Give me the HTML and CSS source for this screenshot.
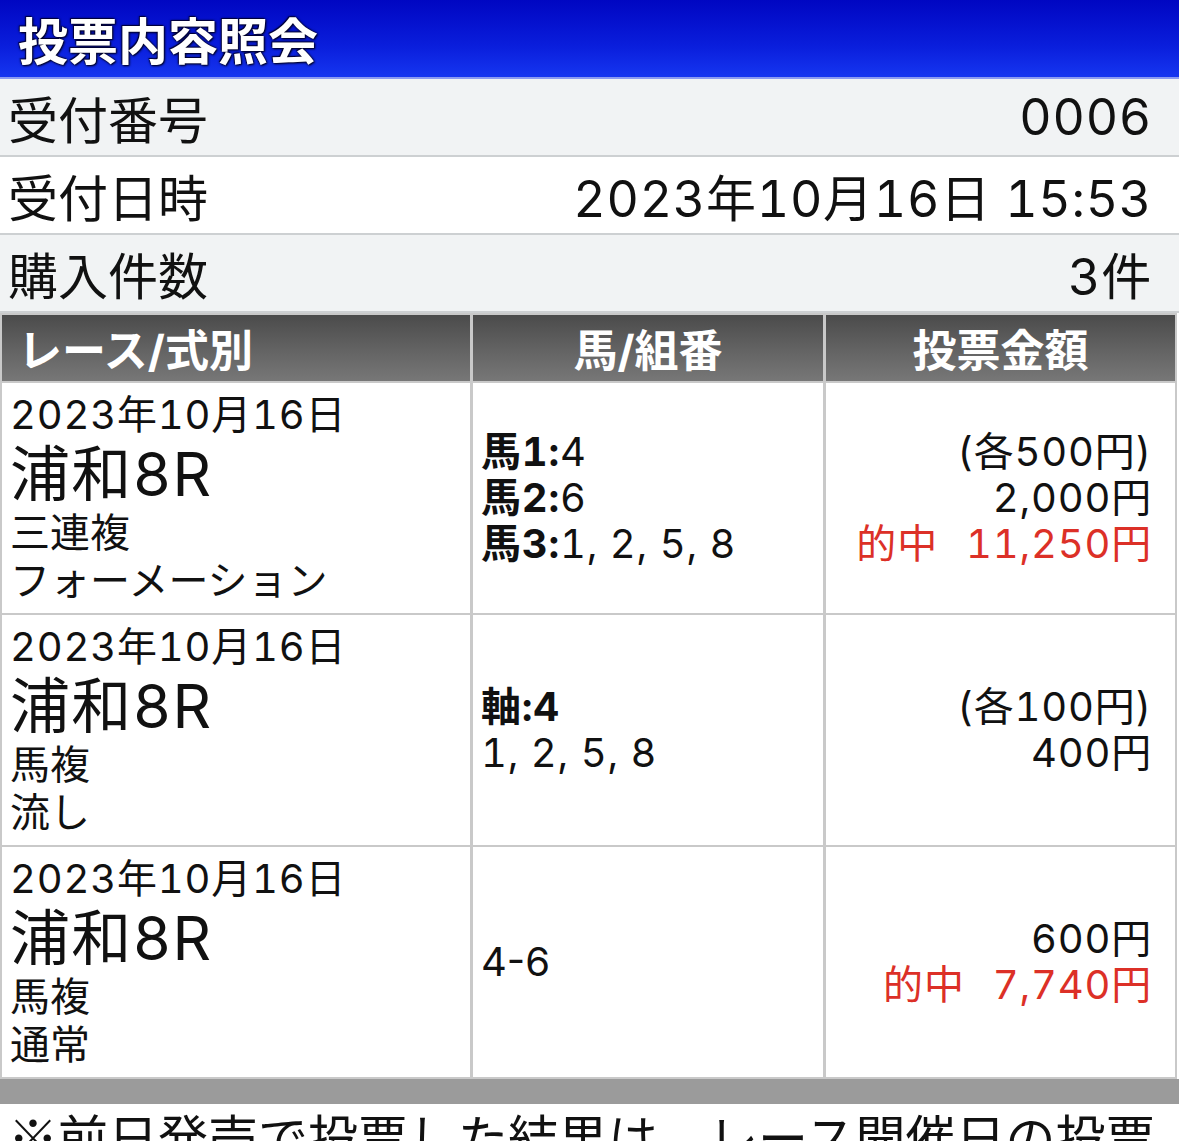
FILE: index.html
```html
<!DOCTYPE html>
<html lang="ja">
<head>
<meta charset="utf-8">
<title>投票内容照会</title>
<link rel="stylesheet" href="styles.css">
</head>
<body>
<div class="page">
  <header class="title">投票内容照会</header>
  <div class="info">
    <div class="info-row"><span class="label">受付番号</span><span class="value">0006</span></div>
    <div class="info-row alt"><span class="label">受付日時</span><span class="value">2023年10月16日 15:53</span></div>
    <div class="info-row"><span class="label">購入件数</span><span class="value">3件</span></div>
  </div>
  <div class="ticket">
    <div class="th th-left">レース/式別</div>
    <div class="th">馬/組番</div>
    <div class="th">投票金額</div>

    <div class="cell race">
      <div class="date">2023年10月16日</div>
      <div class="place">浦和8R</div>
      <div class="type">三連複</div>
      <div class="type">フォーメーション</div>
    </div>
    <div class="cell combo">
      <div><b>馬1:</b>4</div>
      <div><b>馬2:</b>6</div>
      <div><b>馬3:</b>1, 2, 5, 8</div>
    </div>
    <div class="cell amount">
      <div>(各500円)</div>
      <div>2,000円</div>
      <div class="hit">的中<span class="hit-amt">11,250円</span></div>
    </div>

    <div class="cell race">
      <div class="date">2023年10月16日</div>
      <div class="place">浦和8R</div>
      <div class="type">馬複</div>
      <div class="type">流し</div>
    </div>
    <div class="cell combo">
      <div><b>軸:4</b></div>
      <div>1, 2, 5, 8</div>
    </div>
    <div class="cell amount">
      <div>(各100円)</div>
      <div>400円</div>
    </div>

    <div class="cell race">
      <div class="date">2023年10月16日</div>
      <div class="place">浦和8R</div>
      <div class="type">馬複</div>
      <div class="type">通常</div>
    </div>
    <div class="cell combo">
      <div class="pair">4-6</div>
    </div>
    <div class="cell amount">
      <div>600円</div>
      <div class="hit">的中<span class="hit-amt">7,740円</span></div>
    </div>
  </div>
  <div class="bar"></div>
  <p class="note">※前日発売で投票した結果は、レース開催日の投票内容照会でご確認ください。</p>
</div>
</body>
</html>
```

FILE: styles.css
```css
* { box-sizing: border-box; }
html, body { margin: 0; padding: 0; background: #ffffff; }
body {
  font-family: Inter, "Noto Sans CJK JP", sans-serif;
  font-variant-numeric: tabular-nums;
  color: #111111;
}
.page { width: 1179px; overflow: hidden; }

.title {
  height: 79px;
  display: flex;
  align-items: center;
  padding-left: 18px;
  background: linear-gradient(to bottom, #0006c2 0%, #0a1edc 60%, #1636f0 100%);
  border-bottom: 2px solid #8c9cf2;
  color: #ffffff;
  font-size: 50px;
  font-weight: 700;
  text-shadow: 0 0 3px #000022, 1px 1px 2px #000022, -1px -1px 1px #000044;
  padding-bottom: 2px;
}

.info-row {
  height: 78px;
  display: flex;
  align-items: center;
  justify-content: space-between;
  padding: 0 27px 0 8px;
  background: #f1f3f4;
  border-bottom: 2px solid #cdd0d2;
  font-size: 50px;
}
.info-row.alt { background: #ffffff; }
.value { letter-spacing: 0.015em; }

.ticket {
  width: 1177px;
  display: grid;
  grid-template-columns: 468px 350px 349px;
  column-gap: 3px;
  row-gap: 2px;
  padding: 2px;
  background: #c9c9c9;
}
.th {
  height: 66px;
  display: flex;
  align-items: center;
  justify-content: center;
  background: linear-gradient(to bottom, #4b4b4b 0%, #646464 55%, #777777 100%);
  color: #ffffff;
  font-size: 44px;
  font-weight: 700;
}
.th-left { justify-content: flex-start; padding-left: 16px; }

.cell { background: #ffffff; }
.race { padding: 8px 8px 8px 8px; }
.date { font-size: 40px; line-height: 48px; letter-spacing: 0.02em; }
.place { font-size: 60px; line-height: 70px; letter-spacing: 0.02em; }
.type { font-size: 40px; line-height: 48px; }

.combo {
  display: flex;
  flex-direction: column;
  justify-content: center;
  padding-left: 8px;
  font-size: 40px;
  line-height: 46px;
  letter-spacing: 0.02em;
}
.combo b { font-weight: 700; }
.combo .pair { letter-spacing: 0; font-variant-numeric: proportional-nums; }

.amount {
  display: flex;
  flex-direction: column;
  justify-content: center;
  align-items: flex-end;
  padding-right: 23px;
  font-size: 40px;
  line-height: 46px;
  letter-spacing: 0.02em;
}
.hit { color: #dc3027; }
.hit-amt { margin-left: 28px; }

.bar { height: 25px; background: #9b9b9b; }
.note {
  margin: 0;
  padding: 0 8px;
  font-family: "Noto Sans CJK JP", sans-serif;
  font-size: 50px;
  line-height: 62px;
}
```
